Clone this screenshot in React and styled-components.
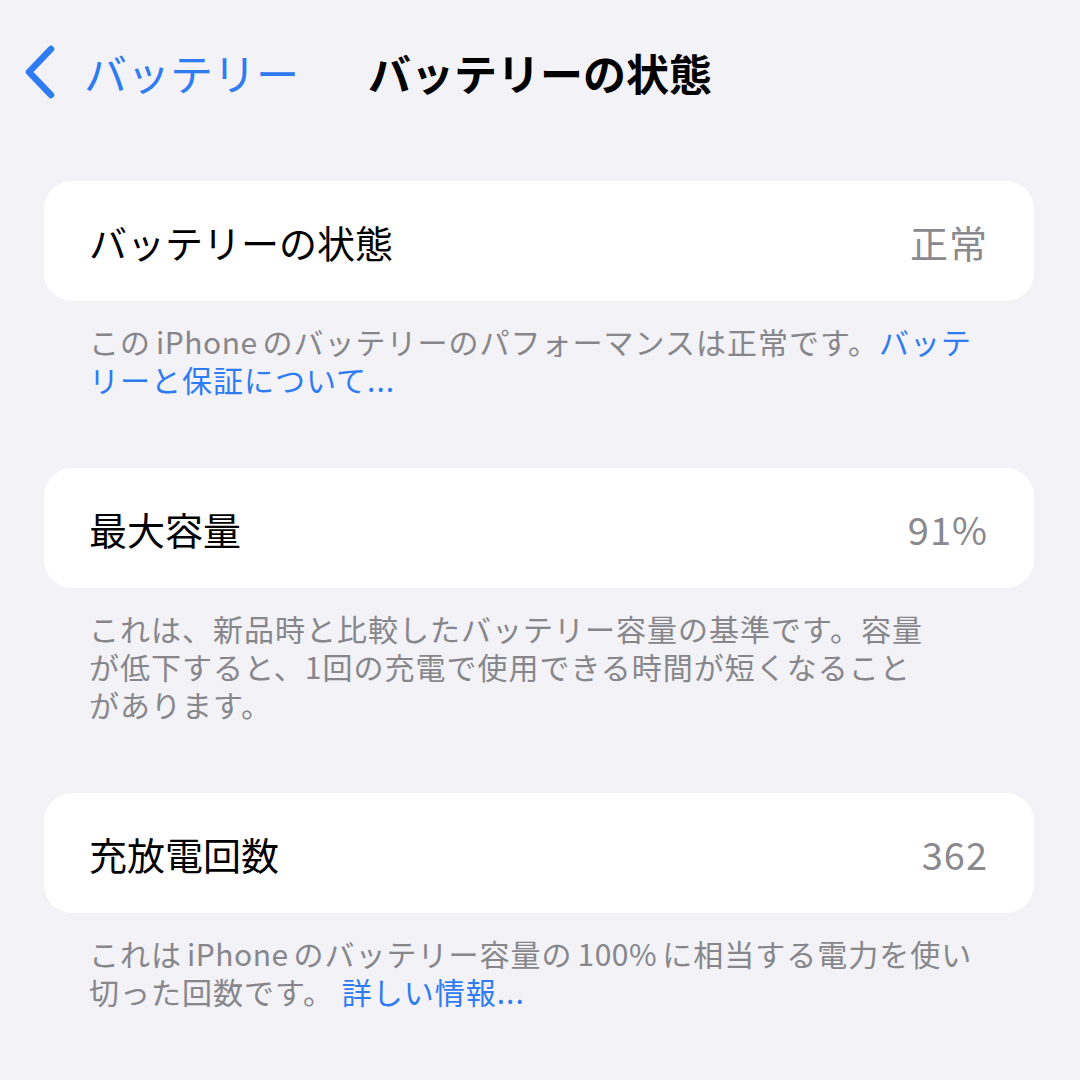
import styled, { createGlobalStyle } from "styled-components";

const GlobalStyle = createGlobalStyle`
  html, body {
    margin: 0;
    background: #f2f2f7;
  }
  body {
    font-family: "Noto Sans CJK JP", "Noto Sans", sans-serif;
    -webkit-font-smoothing: antialiased;
  }
`;

const Screen = styled.div`
  width: 1080px;
  height: 1080px;
  overflow: hidden;
  background: #f2f2f7;
`;

const NavBar = styled.div`
  display: grid;
  grid-template-columns: 1fr auto 1fr;
  align-items: center;
  height: 64px;
  padding-top: 40px;
`;

const BackButton = styled.div`
  display: flex;
  align-items: center;
  gap: 25px;
  padding-left: 23px;
  color: #2f7cf2;
  font-size: 43px;
  line-height: 1;
`;

const Title = styled.div`
  font-size: 43px;
  font-weight: 700;
  color: #000;
  line-height: 1;
`;

const Content = styled.div`
  padding: 0 46px 0 44px;
  margin-top: 77px;
  display: flex;
  flex-direction: column;
  gap: 70px;
`;

const Section = styled.section`
  display: flex;
  flex-direction: column;
`;

const Card = styled.div`
  height: 120px;
  background: #fff;
  border-radius: 28px;
  display: flex;
  align-items: center;
  justify-content: space-between;
  padding: 0 46px 0 45px;
`;

const Label = styled.span`
  font-size: 38px;
  color: #000;
`;

const Value = styled.span`
  font-size: 38px;
  color: #8a8a8e;
  letter-spacing: 1px;
`;

const Footer = styled.p`
  margin: 0;
  padding: 21px 45px 0;
  font-size: 30px;
  line-height: 38px;
  letter-spacing: 1px;
  color: #87878b;
  white-space: nowrap;
`;

const Latin = styled.span`
  margin: 0 5px;
  letter-spacing: 0.5px;
`;

const Link = styled.span`
  color: #2f7cf2;
`;

function Chevron() {
  return (
    <svg width="36" height="56" viewBox="0 0 36 56">
      <path
        d="M28 5 L6 28 L28 51"
        fill="none"
        stroke="#2f7cf2"
        strokeWidth="6.5"
        strokeLinecap="round"
        strokeLinejoin="round"
      />
    </svg>
  );
}

const sections = [
  {
    label: "バッテリーの状態",
    value: "正常",
    footer: (
      <>
        この<Latin>iPhone</Latin>のバッテリーのパフォーマンスは正常です。<Link>バッテ</Link>
        <br />
        <Link>リーと保証について...</Link>
      </>
    ),
  },
  {
    label: "最大容量",
    value: "91%",
    footer: (
      <>
        これは、新品時と比較したバッテリー容量の基準です。容量
        <br />
        が低下すると、1回の充電で使用できる時間が短くなること
        <br />
        があります。
      </>
    ),
  },
  {
    label: "充放電回数",
    value: "362",
    footer: (
      <>
        これは<Latin>iPhone</Latin>のバッテリー容量の<Latin>100%</Latin>に相当する電力を使い
        <br />
        切った回数です。 <Link>詳しい情報...</Link>
      </>
    ),
  },
];

export default function App() {
  return (
    <Screen>
      <GlobalStyle />
      <NavBar>
        <BackButton>
          <Chevron />
          <span>バッテリー</span>
        </BackButton>
        <Title>バッテリーの状態</Title>
        <div />
      </NavBar>
      <Content>
        {sections.map((s, i) => (
          <Section key={`section-${i}`}>
            <Card>
              <Label>{s.label}</Label>
              <Value>{s.value}</Value>
            </Card>
            <Footer>{s.footer}</Footer>
          </Section>
        ))}
      </Content>
    </Screen>
  );
}
